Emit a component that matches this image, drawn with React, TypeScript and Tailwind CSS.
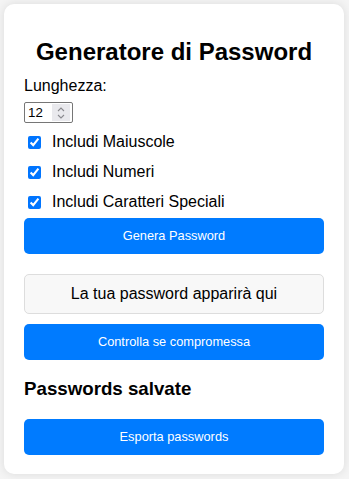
import React from 'react'

const options = ['Includi Maiuscole', 'Includi Numeri', 'Includi Caratteri Speciali']

const BlueButton = ({ label, className = '' }: { label: string; className?: string }) => (
    <button
        className={`w-full h-[36px] rounded-[5px] bg-[#007bff] text-white text-[12.8px] leading-[16px] ${className}`}
    >
        {label}
    </button>
)

const NumberBox = () => (
    <div className="flex items-center w-[49px] h-[21px] border border-[#767676] rounded-[2px] bg-white pl-[3px] pr-[2px]">
        <span className="flex-1 text-[13.33px] leading-[15px] text-black">12</span>
        <span className="flex flex-col items-center justify-center w-[18px] h-[17px] bg-[#e9e9ed]">
            <svg width="8" height="5" viewBox="0 0 8 5" fill="none">
                <path d="M1 4 L4 1 L7 4" stroke="#8a8a8f" strokeWidth="1.1" />
            </svg>
            <svg width="8" height="5" viewBox="0 0 8 5" fill="none" className="mt-[2px]">
                <path d="M1 1 L4 4 L7 1" stroke="#8a8a8f" strokeWidth="1.1" />
            </svg>
        </span>
    </div>
)

export default function App() {
    return (
        <div
            className="min-h-screen bg-[#f4f4f4] pt-[4px] pl-[4px]"
            style={{ fontFamily: '"Liberation Sans", Arial, sans-serif' }}
        >
            <div className="w-[340px] h-[470px] bg-white rounded-[10px] shadow-[0_0_10px_rgba(0,0,0,0.1)] px-[20px] pt-[20px]">
                <h1 className="mt-[14px] text-center text-[24px] leading-[28px] font-bold text-black">
                    Generatore di Password
                </h1>

                <div className="mt-[11px] text-[16px] leading-[18px] text-black">Lunghezza:</div>
                <div className="mt-[7px]">
                    <NumberBox />
                </div>

                <div className="mt-[4px] flex flex-col">
                    {options.map((opt) => (
                        <label key={opt} className="flex items-center h-[30px] text-[16px] leading-[18px] text-black">
                            <input
                                type="checkbox"
                                defaultChecked
                                className="m-0 ml-[4px] mr-[11px] w-[13px] h-[13px] accent-[#0075ff]"
                            />
                            {opt}
                        </label>
                    ))}
                </div>

                <BlueButton label="Genera Password" className="mt-[1px]" />

                <div className="mt-[20px] h-[40px] flex items-center justify-center rounded-[5px] border border-[#dddddd] bg-[#f8f8f8] text-[16px] leading-[18px] text-black">
                    La tua password apparirà qui
                </div>

                <BlueButton label="Controlla se compromessa" className="mt-[10px]" />

                <h3 className="mt-[18px] text-[18.72px] leading-[22px] font-bold text-black">
                    Passwords salvate
                </h3>

                <BlueButton label="Esporta passwords" className="mt-[19px]" />
            </div>
        </div>
    )
}
